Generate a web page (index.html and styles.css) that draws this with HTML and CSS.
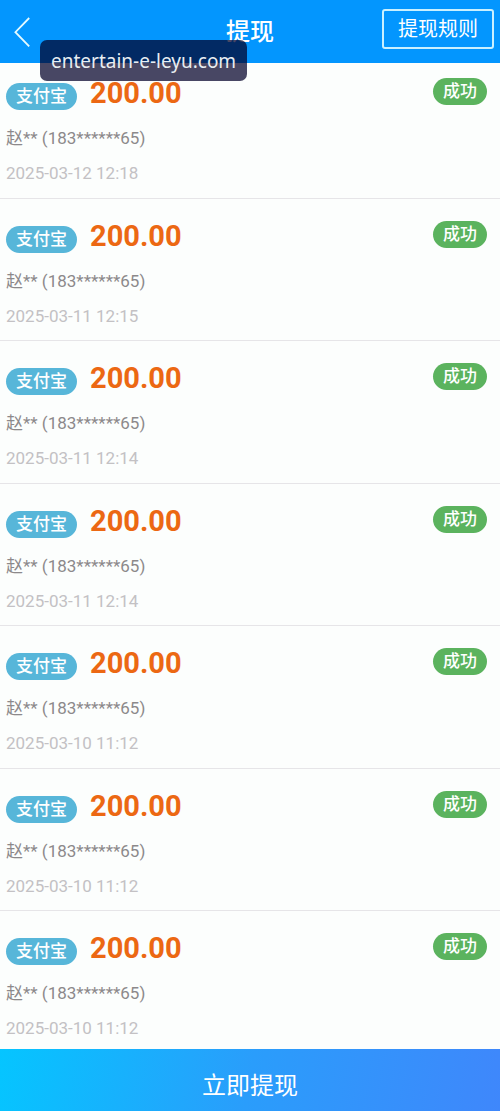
FILE: index.html
```html
<!DOCTYPE html>
<html lang="zh-CN">
<head>
    <meta charset="UTF-8">
    <meta name="viewport" content="width=device-width, initial-scale=1.0">
    <title>提现</title>
    <link rel="stylesheet" href="styles.css">
</head>
<body>
    <header class="topbar">
        <button class="back" aria-label="返回">
            <svg width="16" height="30" viewBox="0 0 16 30" fill="none" stroke="#e4faff" stroke-width="1.8">
                <path d="M15.2 1 L1.4 15.2 L15.2 29.4"/>
            </svg>
        </button>
        <h1>提现</h1>
        <button class="rules">提现规则</button>
        <div class="site">entertain-e-leyu.com</div>
    </header>

    <ul id="recordList"></ul>

    <button class="submit">立即提现</button>

    <script>
        const times = [
            '2025-03-12 12:18',
            '2025-03-11 12:15',
            '2025-03-11 12:14',
            '2025-03-11 12:14',
            '2025-03-10 11:12',
            '2025-03-10 11:12',
            '2025-03-10 11:12'
        ];

        const recordList = document.getElementById('recordList');
        times.forEach(time => {
            const li = document.createElement('li');
            li.innerHTML = `
                <div class="row">
                    <span class="channel">支付宝</span>
                    <span class="amount">200.00</span>
                    <span class="status">成功</span>
                </div>
                <p class="account">赵** (183******65)</p>
                <p class="time">${time}</p>
            `;
            recordList.appendChild(li);
        });
    </script>
</body>
</html>
```
FILE: styles.css
```css
* {
    box-sizing: border-box;
}
body {
    margin: 0;
    min-height: 100vh;
    display: flex;
    flex-direction: column;
    background: #fcfefd;
    font-family: Roboto, "Noto Sans CJK SC", sans-serif;
}
button {
    font-family: inherit;
    color: #fff;
    cursor: pointer;
}
.topbar {
    position: relative;
    z-index: 1;
    height: 63px;
    padding: 0 6px;
    display: grid;
    grid-template-columns: 1fr auto 1fr;
    align-items: center;
    background: #0396fe;
    color: #fff;
}
.back {
    justify-self: start;
    margin-left: 8px;
    padding: 0;
    border: 0;
    background: none;
}
.back svg {
    display: block;
}
h1 {
    margin: 0;
    font-size: 24px;
    line-height: 32px;
    font-weight: 500;
}
.rules {
    justify-self: end;
    height: 40px;
    margin-bottom: 6px;
    padding: 0 14px;
    border: 2px solid #c9f0ff;
    border-radius: 3px;
    background: none;
    font-size: 20px;
    line-height: 32px;
}
/* site address floats over the bar and the list */
.site {
    position: absolute;
    left: 40px;
    top: 40px;
    padding: 7px 11px 5px;
    border-radius: 7px;
    background: rgba(3, 0, 40, 0.72);
    font-family: "Noto Sans", sans-serif;
    font-size: 19px;
    line-height: 29px;
    color: #e8eef2;
}
/* first and last records run slightly under the bars */
ul {
    flex: 1;
    margin: -7px 0 -5px;
    padding: 0;
    list-style-type: none;
    display: flex;
    flex-direction: column;
}
li {
    flex: 1;
    padding: 20px 13px 0 6px;
    border-bottom: 1px solid #e6e5e8;
}
p {
    margin: 0;
}
.row {
    display: flex;
    align-items: flex-start;
    height: 46px;
}
.channel,
.status {
    height: 27px;
    padding: 0 10px;
    border-radius: 14px;
    color: #fff;
    font-size: 17px;
    line-height: 26px;
    font-weight: 500;
}
.channel {
    margin: 7px 13px 0 0;
    background: #57b6d9;
}
.amount {
    font-size: 29px;
    line-height: 34px;
    font-weight: 700;
    color: #ec6813;
}
.status {
    margin: 2px 0 0 auto;
    background: #5bb35e;
}
.account,
.time {
    font-size: 17px;
    line-height: 32px;
}
.account {
    color: #8c898b;
}
.time {
    margin-top: 3px;
    color: #c3c1c4;
}
.submit {
    position: relative;
    height: 62px;
    padding: 6px 0 0;
    border: 0;
    background: linear-gradient(100deg, #05c5ff, #2a9dfb 50%, #3f87fb);
    font-size: 24px;
}
```
